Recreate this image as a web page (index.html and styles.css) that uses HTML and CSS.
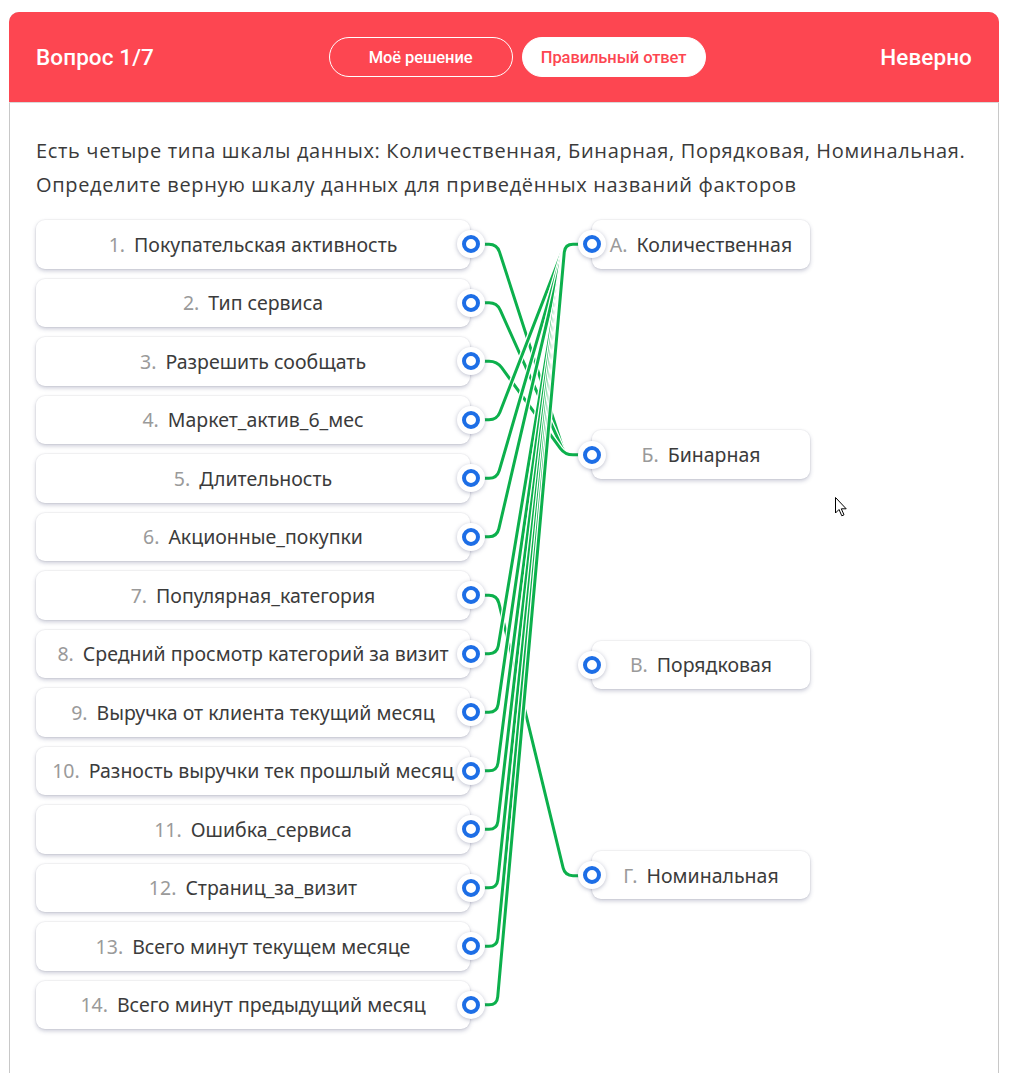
FILE: index.html
```html
<!DOCTYPE html>
<html lang="ru">
<head>
<meta charset="utf-8">
<title>Вопрос 1/7</title>
<link rel="stylesheet" href="styles.css">
</head>
<body>
<div class="card">
  <header class="card-head">
    <div class="q-title">Вопрос 1/7</div>
    <div class="tabs">
      <button class="tab tab-outline">Моё решение</button>
      <button class="tab tab-active">Правильный ответ</button>
    </div>
    <div class="verdict">Неверно</div>
  </header>
  <div class="card-body">
    <p class="question">Есть четыре типа шкалы данных: Количественная, Бинарная, Порядковая, Номинальная.<br>Определите верную шкалу данных для приведённых названий факторов</p>
    <div class="match">
      <svg class="links" width="774" height="809" viewBox="0 0 774 809">
        <defs>
          <path id="l1" d="M433 24.25 H453 Q461 24.25 463.46 31.86 L526.54 227.14 Q529 234.75 537 234.75 H556"/>
          <path id="l2" d="M433 82.75 H453 Q461 82.75 464.27 90.05 L525.73 227.45 Q529 234.75 537 234.75 H556"/>
          <path id="l3" d="M433 141.25 H453 Q461 141.25 465.70 147.72 L524.30 228.28 Q529 234.75 537 234.75 H556"/>
          <path id="l4" d="M433 199.75 H453 Q461 199.75 463.89 192.29 L526.11 31.71 Q529 24.25 537 24.25 H556"/>
          <path id="l5" d="M433 258.25 H453 Q461 258.25 463.23 250.57 L526.77 31.93 Q529 24.25 537 24.25 H556"/>
          <path id="l6" d="M433 316.75 H453 Q461 316.75 462.81 308.96 L527.19 32.04 Q529 24.25 537 24.25 H556"/>
          <path id="l7" d="M433 375.25 H453 Q461 375.25 462.88 383.03 L527.12 647.97 Q529 655.75 537 655.75 H556"/>
          <path id="l8" d="M433 433.75 H453 Q461 433.75 462.31 425.86 L527.69 32.14 Q529 24.25 537 24.25 H556"/>
          <path id="l9" d="M433 492.25 H453 Q461 492.25 462.15 484.33 L527.85 32.17 Q529 24.25 537 24.25 H556"/>
          <path id="l10" d="M433 550.75 H453 Q461 550.75 462.02 542.82 L527.98 32.18 Q529 24.25 537 24.25 H556"/>
          <path id="l11" d="M433 609.25 H453 Q461 609.25 461.92 601.30 L528.08 32.20 Q529 24.25 537 24.25 H556"/>
          <path id="l12" d="M433 667.75 H453 Q461 667.75 461.84 659.79 L528.16 32.21 Q529 24.25 537 24.25 H556"/>
          <path id="l13" d="M433 726.25 H453 Q461 726.25 461.77 718.29 L528.23 32.21 Q529 24.25 537 24.25 H556"/>
          <path id="l14" d="M433 784.75 H453 Q461 784.75 461.71 776.78 L528.29 32.22 Q529 24.25 537 24.25 H556"/>
        </defs>
        <use href="#l1" class="halo"/><use href="#l1" class="wire"/>
        <use href="#l2" class="halo"/><use href="#l2" class="wire"/>
        <use href="#l3" class="halo"/><use href="#l3" class="wire"/>
        <use href="#l4" class="halo"/><use href="#l4" class="wire"/>
        <use href="#l5" class="halo"/><use href="#l5" class="wire"/>
        <use href="#l6" class="halo"/><use href="#l6" class="wire"/>
        <use href="#l7" class="halo"/><use href="#l7" class="wire"/>
        <use href="#l8" class="halo"/><use href="#l8" class="wire"/>
        <use href="#l9" class="halo"/><use href="#l9" class="wire"/>
        <use href="#l10" class="halo"/><use href="#l10" class="wire"/>
        <use href="#l11" class="halo"/><use href="#l11" class="wire"/>
        <use href="#l12" class="halo"/><use href="#l12" class="wire"/>
        <use href="#l13" class="halo"/><use href="#l13" class="wire"/>
        <use href="#l14" class="halo"/><use href="#l14" class="wire"/>
      </svg>
      <div class="col-left">
        <div class="item"><span class="num">1.</span><span>Покупательская активность</span><i class="dot dot-r"></i></div>
        <div class="item"><span class="num">2.</span><span>Тип сервиса</span><i class="dot dot-r"></i></div>
        <div class="item"><span class="num">3.</span><span>Разрешить сообщать</span><i class="dot dot-r"></i></div>
        <div class="item"><span class="num">4.</span><span>Маркет_актив_6_мес</span><i class="dot dot-r"></i></div>
        <div class="item"><span class="num">5.</span><span>Длительность</span><i class="dot dot-r"></i></div>
        <div class="item"><span class="num">6.</span><span>Акционные_покупки</span><i class="dot dot-r"></i></div>
        <div class="item"><span class="num">7.</span><span>Популярная_категория</span><i class="dot dot-r"></i></div>
        <div class="item"><span class="num">8.</span><span>Средний просмотр категорий за визит</span><i class="dot dot-r"></i></div>
        <div class="item"><span class="num">9.</span><span>Выручка от клиента текущий месяц</span><i class="dot dot-r"></i></div>
        <div class="item"><span class="num">10.</span><span>Разность выручки тек прошлый месяц</span><i class="dot dot-r"></i></div>
        <div class="item"><span class="num">11.</span><span>Ошибка_сервиса</span><i class="dot dot-r"></i></div>
        <div class="item"><span class="num">12.</span><span>Страниц_за_визит</span><i class="dot dot-r"></i></div>
        <div class="item"><span class="num">13.</span><span>Всего минут текущем месяце</span><i class="dot dot-r"></i></div>
        <div class="item"><span class="num">14.</span><span>Всего минут предыдущий месяц</span><i class="dot dot-r"></i></div>
      </div>
      <div class="col-right">
        <div class="item"><i class="dot dot-l"></i><span class="num">А.</span><span>Количественная</span></div>
        <div class="item"><i class="dot dot-l"></i><span class="num">Б.</span><span>Бинарная</span></div>
        <div class="item"><i class="dot dot-l"></i><span class="num">В.</span><span>Порядковая</span></div>
        <div class="item"><i class="dot dot-l"></i><span class="num">Г.</span><span>Номинальная</span></div>
      </div>
    </div>
  </div>
  <svg class="cursor" width="13" height="20" viewBox="0 0 13 20">
    <path d="M0.5 0.5 V16 L4 12.5 L6.8 18.8 L9 17.8 L6.3 11.8 H11.2 Z" fill="#fff" stroke="#000" stroke-width="1" stroke-linejoin="miter"/>
  </svg>
</div>
</body>
</html>
```

FILE: styles.css
```css
* {
  box-sizing: border-box;
}

html, body {
  margin: 0;
  padding: 0;
  background: #ffffff;
}

body {
  font-family: "Noto Sans", "Open Sans", "Liberation Sans", sans-serif;
  color: #333333;
}

.card {
  position: relative;
  width: 990px;
  margin: 12px 0 0 9px;
  border: 1px solid #c8c8c8;
  border-bottom: none;
  border-radius: 10px 10px 0 0;
  background: #ffffff;
}

.card-head {
  display: flex;
  align-items: center;
  justify-content: space-between;
  height: 91px;
  margin: -1px -1px 0 -1px;
  padding: 0 27px;
  background: #fd4651;
  border-radius: 10px 10px 0 0;
  border-bottom: 1px solid #d9d9d9;
  color: #ffffff;
}

.q-title,
.verdict {
  font-family: Roboto, "Noto Sans", sans-serif;
  font-size: 22.5px;
  font-weight: 500;
  letter-spacing: 0.1px;
}

.tabs {
  display: flex;
  gap: 9px;
}

.tab {
  width: 184px;
  height: 40px;
  border-radius: 20px;
  font-family: Roboto, "Noto Sans", sans-serif;
  font-size: 16.5px;
  font-weight: 500;
  letter-spacing: -0.1px;
  cursor: pointer;
}

.tab-outline {
  background: transparent;
  border: 1px solid #ffffff;
  color: #ffffff;
}

.tab-active {
  background: #ffffff;
  border: 1px solid #ffffff;
  color: #fd4651;
}

.card-body {
  padding: 31px 26px 60px 26px;
}

.question {
  margin: 0 0 18px 0;
  font-family: "Open Sans", "Noto Sans", sans-serif;
  font-size: 20px;
  letter-spacing: 0.65px;
  line-height: 34px;
  color: #3a3a3a;
}

.match {
  position: relative;
  display: grid;
  grid-template-columns: 434px 218px;
  column-gap: 122px;
  align-items: start;
}

.links {
  position: absolute;
  left: 0;
  top: 0;
  overflow: visible;
  z-index: 0;
}

.halo {
  fill: none;
  stroke: #ffffff;
  stroke-width: 5.5;
}

.wire {
  fill: none;
  stroke: #0cb04c;
  stroke-width: 3;
}

.col-left,
.col-right {
  display: flex;
  flex-direction: column;
  position: relative;
  z-index: 1;
}

.col-left {
  gap: 10px;
}

.col-right {
  gap: 161.8px;
}

.item {
  position: relative;
  display: flex;
  align-items: center;
  justify-content: center;
  gap: 9px;
  height: 48.5px;
  padding: 0 12px;
  background: #ffffff;
  border-radius: 9px;
  box-shadow: 0 0 0 1px rgba(0, 0, 0, 0.03), 0 2px 4px rgba(60, 66, 110, 0.28);
  font-size: 19.5px;
  color: #3b3b3b;
  white-space: nowrap;
}

.num {
  color: #9a9a9a;
}

.dot {
  position: absolute;
  top: 50%;
  width: 28px;
  height: 28px;
  margin-top: -14px;
  border-radius: 50%;
  background: #ffffff;
  box-shadow: 0 1px 4px rgba(60, 66, 110, 0.35);
}

.dot::after {
  content: "";
  position: absolute;
  left: 5px;
  top: 5px;
  width: 18px;
  height: 18px;
  border-radius: 50%;
  border: 4.5px solid #1d6ee6;
  box-sizing: border-box;
}

.dot-r {
  right: -15px;
}

.dot-l {
  left: -14px;
}

.cursor {
  position: absolute;
  left: 825px;
  top: 484px;
  z-index: 5;
}
```
